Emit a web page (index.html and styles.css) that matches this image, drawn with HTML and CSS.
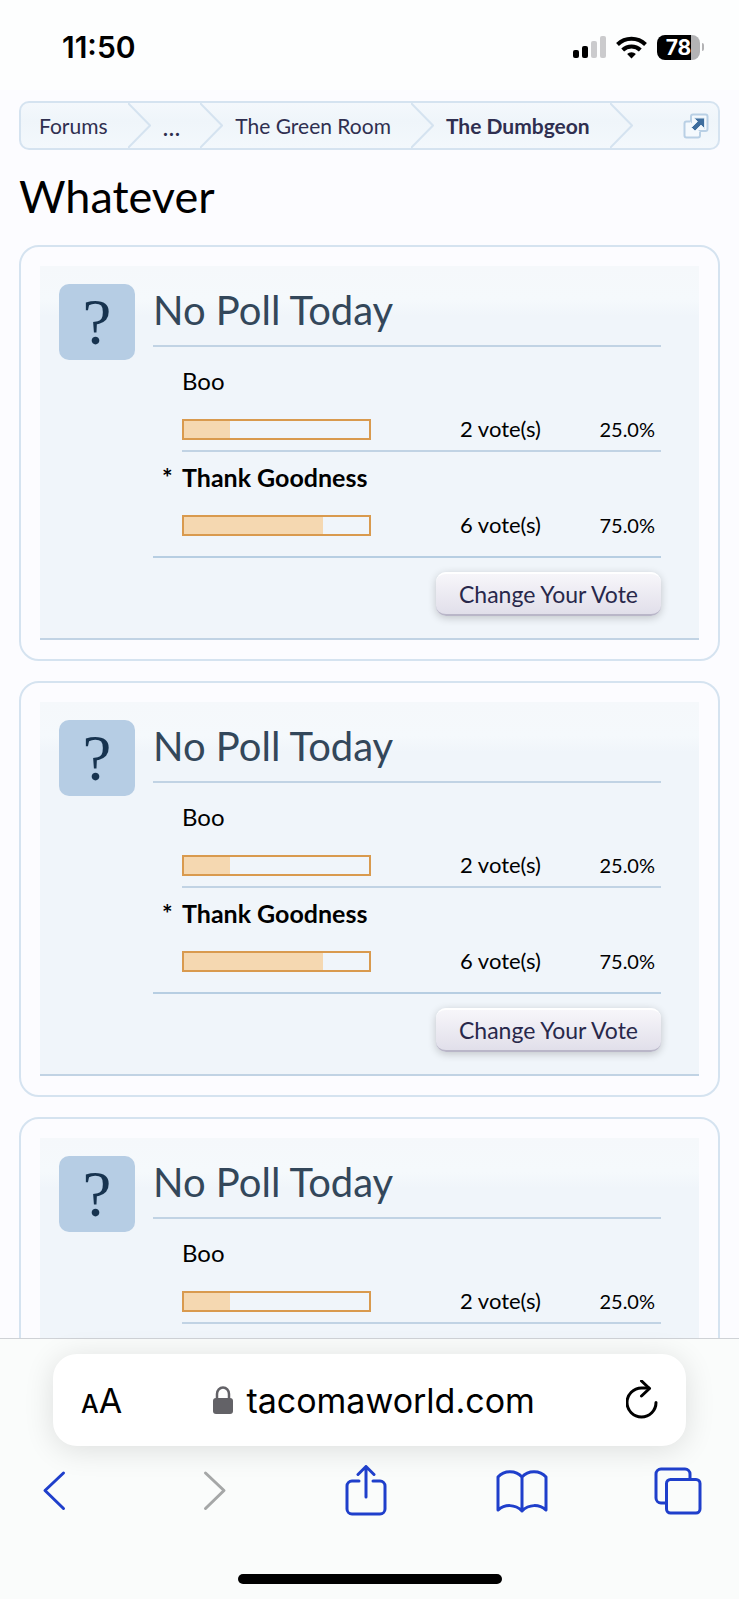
FILE: index.html
```html
<!DOCTYPE html>
<html lang="en">
<head>
    <meta charset="UTF-8">
    <meta name="viewport" content="width=device-width, initial-scale=1">
    <title>Whatever</title>
    <link rel="stylesheet" href="styles.css">
</head>
<body>
    <header class="status">
        <span class="clock">11:50</span>
        <div class="status-icons">
            <svg width="33" height="22" viewBox="0 0 33 22">
                <rect x="0" y="14" width="6" height="8" rx="2" />
                <rect x="9" y="10" width="6" height="12" rx="2" />
                <rect x="18" y="5" width="6" height="17" rx="2" fill="#cbcbcd" />
                <rect x="27" y="0" width="6" height="22" rx="2" fill="#cbcbcd" />
            </svg>
            <svg width="31" height="23" viewBox="0 0 31 23" fill="none" stroke="#000" stroke-width="4">
                <path d="M1.5 8.5a20 20 0 0 1 28 0" />
                <path d="M6.7 14a12.6 12.6 0 0 1 17.6 0" />
                <path d="M15.5 22.5l-4.4-4.4a6.3 6.3 0 0 1 8.8 0z" fill="#000" stroke="none" />
            </svg>
            <div class="battery">
                <span class="level">78</span>
                <span class="cap"></span>
            </div>
        </div>
    </header>

    <main class="page">
        <nav class="crumbs">
            <a href="#">Forums</a>
            <svg class="arrow" width="23" height="45" viewBox="0 0 23 45"><path d="M0 0l22 22.500L0 45" /></svg>
            <a href="#" class="more">...</a>
            <svg class="arrow" width="23" height="45" viewBox="0 0 23 45"><path d="M0 0l22 22.500L0 45" /></svg>
            <a href="#">The Green Room</a>
            <svg class="arrow" width="23" height="45" viewBox="0 0 23 45"><path d="M0 0l22 22.500L0 45" /></svg>
            <a href="#" class="current">The Dumbgeon</a>
            <svg class="arrow" width="23" height="45" viewBox="0 0 23 45"><path d="M0 0l22 22.500L0 45" /></svg>
            <button class="jump" aria-label="Open quick navigation">
                <svg width="26" height="26" viewBox="0 0 26 26" fill="none">
                    <rect x="8" y="1.500" width="16.500" height="16.500" rx="2" fill="#f4f9fd" stroke="#b9d0e5" stroke-width="2" />
                    <path d="M7 8.500H3.500a2 2 0 0 0-2 2V22.500a2 2 0 0 0 2 2H15a2 2 0 0 0 2-2V19" fill="#f4f9fd" stroke="#b9d0e5" stroke-width="2" />
                    <path d="M11 5h10.500v10.500l-3.500-3.500-6 6-3.500-3.500 6-6z" fill="#3f6e9e" stroke="#dce9f4" stroke-width="1" />
                </svg>
            </button>
        </nav>

        <h1>Whatever</h1>

        <section class="card">
            <div class="poll">
                <div class="mark">?</div>
                <div class="content">
                    <h2>No Poll Today</h2>
                    <ul class="options">
                        <li>
                            <div class="label">Boo</div>
                            <div class="result">
                                <div class="bar"><div class="fill" style="width: 25%"></div></div>
                                <span class="votes">2 vote(s)</span>
                                <span class="percent">25.0%</span>
                            </div>
                        </li>
                        <li>
                            <div class="label voted">Thank Goodness</div>
                            <div class="result">
                                <div class="bar"><div class="fill" style="width: 75%"></div></div>
                                <span class="votes">6 vote(s)</span>
                                <span class="percent">75.0%</span>
                            </div>
                        </li>
                    </ul>
                    <div class="actions"><button class="btn">Change Your Vote</button></div>
                </div>
            </div>
        </section>

        <section class="card">
            <div class="poll">
                <div class="mark">?</div>
                <div class="content">
                    <h2>No Poll Today</h2>
                    <ul class="options">
                        <li>
                            <div class="label">Boo</div>
                            <div class="result">
                                <div class="bar"><div class="fill" style="width: 25%"></div></div>
                                <span class="votes">2 vote(s)</span>
                                <span class="percent">25.0%</span>
                            </div>
                        </li>
                        <li>
                            <div class="label voted">Thank Goodness</div>
                            <div class="result">
                                <div class="bar"><div class="fill" style="width: 75%"></div></div>
                                <span class="votes">6 vote(s)</span>
                                <span class="percent">75.0%</span>
                            </div>
                        </li>
                    </ul>
                    <div class="actions"><button class="btn">Change Your Vote</button></div>
                </div>
            </div>
        </section>

        <section class="card">
            <div class="poll">
                <div class="mark">?</div>
                <div class="content">
                    <h2>No Poll Today</h2>
                    <ul class="options">
                        <li>
                            <div class="label">Boo</div>
                            <div class="result">
                                <div class="bar"><div class="fill" style="width: 25%"></div></div>
                                <span class="votes">2 vote(s)</span>
                                <span class="percent">25.0%</span>
                            </div>
                        </li>
                        <li></li>
                    </ul>
                </div>
            </div>
        </section>
    </main>

    <footer class="browser">
        <div class="address">
            <button class="text-size" aria-label="Text size"><span class="small">A</span><span>A</span></button>
            <a href="#" class="url">
                <svg width="20" height="28" viewBox="0 0 20 28">
                    <path d="M4 13V8a6 6.500 0 0 1 12 0v5" fill="none" stroke="#636267" stroke-width="2.500" />
                    <rect x="0" y="12" width="20" height="16" rx="3" fill="#636267" />
                </svg>
                tacomaworld.com
            </a>
            <button aria-label="Reload">
                <svg width="32" height="40" viewBox="0 0 32 40" fill="none" stroke="#000" stroke-width="3" stroke-linecap="round" stroke-linejoin="round">
                    <path d="M30 22.500A14.500 14.500 0 1 1 15.500 8H23" />
                    <path d="M15.500 1l8 7.500-8 7.500" />
                </svg>
            </button>
        </div>
        <div class="tools">
            <button aria-label="Back">
                <svg width="24" height="52" viewBox="0 0 24 52"><path d="M21.500 8L3 25.500 21.500 43.500" /></svg>
            </button>
            <button aria-label="Forward" disabled>
                <svg width="34" height="52" viewBox="0 0 34 52"><path d="M12.500 8L31 25.500 12.500 43.500" /></svg>
            </button>
            <button aria-label="Share">
                <svg width="42" height="52" viewBox="0 0 42 52"><path d="M14 16H7a5 5 0 0 0-5 5v23a5 5 0 0 0 5 5h28a5 5 0 0 0 5-5V21a5 5 0 0 0-5-5h-7M21 32V2M13 9.500l8-8 8 8" /></svg>
            </button>
            <button aria-label="Bookmarks">
                <svg width="52" height="52" viewBox="0 0 52 52"><path d="M26 12C20 5 8 5 2 12v33c7-6 17-6 24 1 7-7 17-7 24-1V12C44 5 32 5 26 12v34" /></svg>
            </button>
            <button aria-label="Tabs">
                <svg width="48" height="52" viewBox="0 0 48 52"><path d="M36 14V9a5 5 0 0 0-5-5H7a5 5 0 0 0-5 5v24a5 5 0 0 0 5 5h5" /><rect x="12.500" y="14.500" width="33.500" height="33.500" rx="4" /></svg>
            </button>
        </div>
        <div class="home"></div>
    </footer>
</body>
</html>
```
FILE: styles.css
```css
* {
    box-sizing: border-box;
}

body {
    margin: 0;
    height: 100vh;
    display: flex;
    flex-direction: column;
    overflow: hidden;
    background: #fcfcff;
    color: #000;
    font-family: Lato, sans-serif;
}

button {
    padding: 0;
    border: none;
    background: none;
    font: inherit;
    color: inherit;
    cursor: pointer;
}

svg {
    display: block;
    flex: none;
}

a {
    color: inherit;
    text-decoration: none;
}

/* status bar */
.status {
    flex: none;
    height: 90px;
    padding: 4px 35px 0 62px;
    display: flex;
    justify-content: space-between;
    align-items: center;
    background: #fdfefe;
    font-family: Inter, sans-serif;
}

.clock {
    font-size: 30px;
    font-weight: 600;
}

.status-icons {
    display: flex;
    align-items: center;
    gap: 10px;
}

.battery {
    display: flex;
    align-items: center;
    gap: 2px;
}

.level {
    width: 43px;
    height: 25px;
    border-radius: 8px;
    background: linear-gradient(to right, #000 78%, #b3b3b5 78%);
    color: #fff;
    font-size: 21px;
    font-weight: 700;
    line-height: 25px;
    text-align: center;
}

.cap {
    width: 2px;
    height: 8px;
    border-radius: 0 2px 2px 0;
    background: #b3b3b5;
}

/* page */
.page {
    flex: 1;
    min-height: 0;
    padding: 11px 19px 0;
    overflow: hidden;
}

.crumbs {
    height: 49px;
    padding: 0 9px 0 18px;
    display: flex;
    align-items: center;
    border: 2px solid #d5e3f0;
    border-radius: 10px;
    background: linear-gradient(#f4f8fc, #eff5fa 40%, #f3f8fc);
    color: #2f2f50;
    font-size: 21px;
    white-space: nowrap;
}

.crumbs a {
    padding-right: 20px;
}

.crumbs a + .arrow + a {
    padding-left: 12px;
}

.crumbs .more {
    font-size: 25px;
}

.crumbs .current {
    font-weight: 700;
}

.arrow {
    fill: none;
    stroke: #d5e3f0;
    stroke-width: 2;
}

.jump {
    margin-left: auto;
}

h1 {
    margin: 19px 0 21px;
    font-size: 45px;
    font-weight: 400;
    line-height: 55px;
}

.card {
    margin-bottom: 20px;
    padding: 19px;
    border: 2px solid #d5e3f0;
    border-radius: 20px;
}

.poll {
    min-height: 374px;
    padding: 18px 38px 22px 19px;
    display: flex;
    gap: 18px;
    border-bottom: 2px solid #c1d3e4;
    background: linear-gradient(#f5f8fb, #f5f9fc 34px, #f0f5fa 50px);
}

.mark {
    flex: none;
    width: 76px;
    height: 76px;
    border-radius: 10px;
    background: #b6cde4;
    color: #17334f;
    font-family: "Liberation Serif", serif;
    font-size: 65px;
    line-height: 76px;
    text-align: center;
}

.content {
    flex: 1;
}

h2 {
    margin: 0;
    padding-bottom: 9px;
    border-bottom: 2px solid #c1d3e4;
    color: #33475a;
    font-size: 40px;
    font-weight: 400;
    line-height: 52px;
}

.options {
    margin: 0;
    padding: 9px 0 0 29px;
    list-style: none;
    border-bottom: 2px solid #b7cee2;
}

.options li {
    padding-top: 7px;
    height: 96px;
    border-bottom: 2px solid #c1d3e4;
}

.options li:last-child {
    height: 104px;
    border-bottom: none;
}

.label {
    position: relative;
    font-size: 24px;
    line-height: 36px;
}

.voted {
    font-size: 25px;
    font-weight: 700;
}

.voted::before {
    content: "*";
    position: absolute;
    left: -20px;
}

.result {
    padding-top: 19px;
    display: flex;
    align-items: center;
    font-size: 22px;
    line-height: 22px;
}

.bar {
    width: 189px;
    height: 21px;
    border: 2px solid #d99a4e;
}

.fill {
    height: 100%;
    background: #f5d8b1;
}

.votes {
    flex: 1;
    text-align: right;
}

.percent {
    width: 120px;
    padding-right: 6px;
    font-size: 20px;
    text-align: right;
}

.actions {
    padding-top: 14px;
    display: flex;
    justify-content: flex-end;
}

.btn {
    height: 44px;
    padding: 0 23px;
    border-top: 2px solid #fff;
    border-bottom: 2px solid #b9b6c8;
    border-radius: 10px;
    background: linear-gradient(#f7f6fa, #e1dfea);
    box-shadow: 0 2px 8px rgba(0, 0, 0, 0.2);
    color: #28284b;
    font-size: 23px;
}

/* browser bar */
.browser {
    flex: none;
    padding: 15px 0;
    border-top: 1px solid #cfd2d6;
    background: #fafcfb;
    font-family: Inter, sans-serif;
}

.address {
    height: 92px;
    margin: 0 53px;
    padding: 0 28px;
    display: flex;
    justify-content: space-between;
    align-items: center;
    border-radius: 24px;
    background: #fff;
    box-shadow: 0 4px 30px rgba(0, 0, 0, 0.12);
}

.text-size {
    font-size: 34px;
}

.text-size .small {
    font-size: 25px;
    font-weight: 500;
}

.url {
    display: flex;
    align-items: center;
    gap: 13px;
    font-size: 34px;
}

.tools {
    padding: 19px 35px 0 28px;
    display: flex;
    justify-content: space-between;
    color: #1f3fcb;
}

.tools button {
    width: 52px;
    display: flex;
    justify-content: center;
}

.tools svg {
    fill: none;
    stroke: currentColor;
    stroke-width: 3;
    stroke-linecap: round;
    stroke-linejoin: round;
}

.tools button:disabled {
    color: #a5a7a7;
}

.home {
    width: 264px;
    height: 10px;
    margin: 57px auto 0;
    border-radius: 5px;
    background: #000;
}
```
